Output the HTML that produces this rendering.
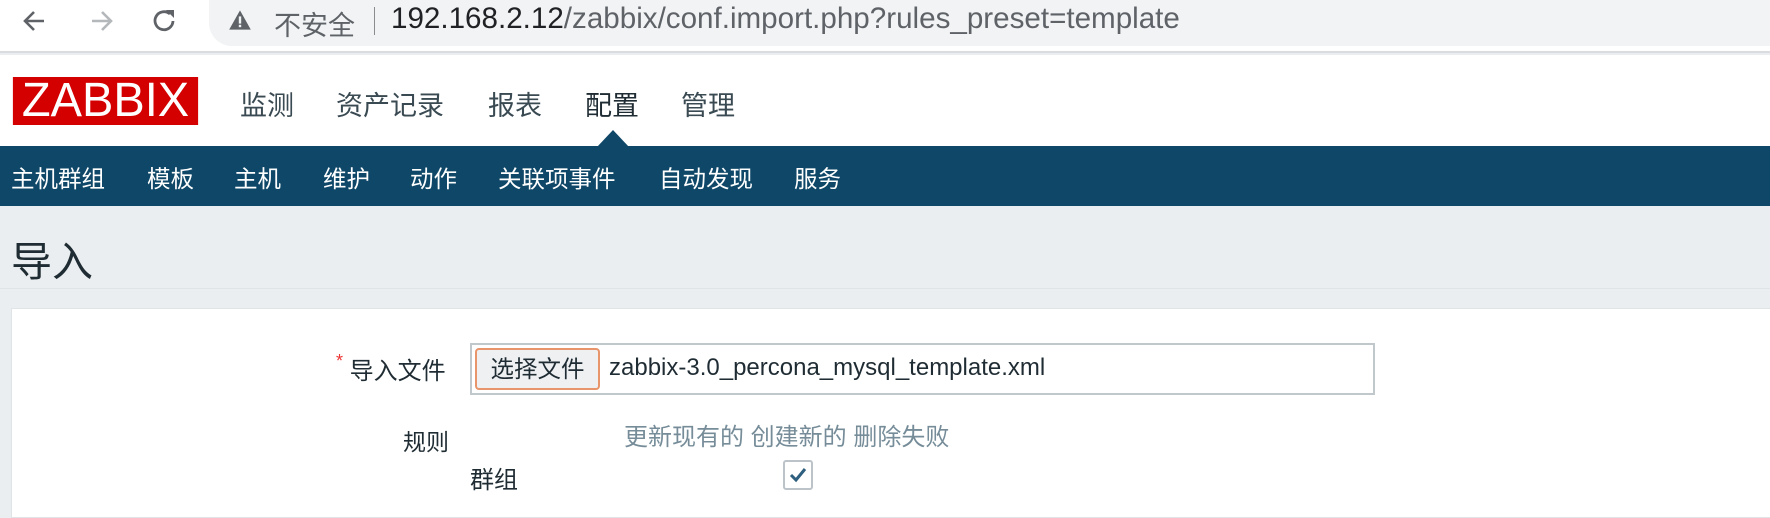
<!DOCTYPE html>
<html><head><meta charset="utf-8"><style>
*{margin:0;padding:0;box-sizing:border-box}
body{width:1770px;height:508px;overflow:hidden;background:#ebeef0;font-family:"Liberation Sans","Noto Sans CJK SC",sans-serif;position:relative}
.a{position:absolute;white-space:nowrap}
</style></head><body>
<div class="a" style="left:0;top:0;width:1770px;height:53px;background:#fff;border-bottom:2px solid #dadce0"></div>
<div class="a" style="left:209px;top:0;width:1600px;height:46px;background:#f1f3f4;border-radius:0 0 0 23px"></div>
<svg class="a" style="left:20px;top:6px" width="170" height="30" viewBox="0 0 170 30">
<path d="M24 15H6M14 6l-9 9 9 9" stroke="#5f6368" stroke-width="2.6" fill="none"/>
<path d="M72 15h18M82 6l9 9-9 9" stroke="#b5b8bb" stroke-width="2.6" fill="none"/>
<path d="M150 8a9 9 0 1 0 3 7" stroke="#5f6368" stroke-width="2.8" fill="none"/><path d="M146 4h8v8z" fill="#5f6368"/>
</svg>
<svg class="a" style="left:228px;top:8px" width="24" height="24" viewBox="0 0 20 20"><path d="M10 2L19 18H1z" fill="#5f6368"/><rect x="9" y="7" width="2" height="6" fill="#f1f3f4"/><rect x="9" y="14" width="2" height="2" fill="#f1f3f4"/></svg>
<div class="a" style="left:274px;top:4px;font-size:27px;color:#5f6368">不安全</div>
<div class="a" style="left:374px;top:7px;width:1px;height:28px;background:#8a8d90"></div>
<div class="a" style="left:391px;top:2px;font-size:29.6px;color:#202124">192.168.2.12<span style="color:#5f6368">/zabbix/conf.import.php?rules_preset=template</span></div>
<div class="a" style="left:0;top:55px;width:1770px;height:91px;background:#fff"></div>
<div class="a" style="left:11px;top:77px;width:189px;height:48px;background:#d40000;color:#fff;font-size:48px;line-height:48px;text-align:center;transform:scaleX(0.98)">ZABBIX</div>
<div class="a" style="left:240px;top:84px;font-size:27px;color:#3a4a52">监测</div>
<div class="a" style="left:336px;top:84px;font-size:27px;color:#3a4a52">资产记录</div>
<div class="a" style="left:488px;top:84px;font-size:27px;color:#3a4a52">报表</div>
<div class="a" style="left:585px;top:84px;font-size:27px;color:#1f2c33">配置</div>
<div class="a" style="left:681px;top:84px;font-size:27px;color:#3a4a52">管理</div>
<div class="a" style="left:0;top:146px;width:1770px;height:60px;background:#0e4767"></div>
<svg class="a" style="left:597px;top:130px" width="32" height="17"><path d="M0 17L16 0L32 17z" fill="#0e4767"/></svg>
<div class="a" style="top:160px;left:11px;font-size:23.5px;color:#fff">主机群组</div>
<div class="a" style="top:160px;left:147px;font-size:23.5px;color:#fff">模板</div>
<div class="a" style="top:160px;left:234px;font-size:23.5px;color:#fff">主机</div>
<div class="a" style="top:160px;left:323px;font-size:23.5px;color:#fff">维护</div>
<div class="a" style="top:160px;left:410px;font-size:23.5px;color:#fff">动作</div>
<div class="a" style="top:160px;left:498px;font-size:23.5px;color:#fff">关联项事件</div>
<div class="a" style="top:160px;left:659px;font-size:23.5px;color:#fff">自动发现</div>
<div class="a" style="top:160px;left:794px;font-size:23.5px;color:#fff">服务</div>
<div class="a" style="left:11px;top:228px;font-size:41px;color:#1f2c33">导入</div>
<div class="a" style="left:0;top:288px;width:1770px;height:1px;background:#dfe4e7"></div>
<div class="a" style="left:11px;top:308px;width:1770px;height:210px;background:#fff;border:1px solid #dfe4e7"></div>
<div class="a" style="left:336px;top:351px;font-size:24px;color:#1f2c33"><span style="color:#e33;font-size:18px;vertical-align:top">*</span> 导入文件</div>
<div class="a" style="left:470px;top:343px;width:905px;height:52px;border:2px solid #c1c8cc;background:#fff"></div>
<div class="a" style="left:475px;top:348px;width:125px;height:42px;border:2px solid #e8956b;border-radius:4px;background:#eef0f2;font-size:23.5px;line-height:38px;text-align:center;color:#1f2c33">选择文件</div>
<div class="a" style="left:609px;top:354px;font-size:24px;color:#1f2c33">zabbix-3.0_percona_mysql_template.xml</div>
<div class="a" style="left:403px;top:423px;font-size:23px;color:#1f2c33">规则</div>
<div class="a" style="left:624px;top:417px;font-size:24px;color:#768d99">更新现有的 创建新的 删除失败</div>
<div class="a" style="left:470px;top:460px;font-size:24px;color:#1f2c33">群组</div>
<div class="a" style="left:783px;top:460px;width:30px;height:30px;border:2px solid #bcc4c9;border-radius:3px;background:#fff"></div>
<svg class="a" style="left:788px;top:466px" width="20" height="18"><path d="M3 9l5 5L17 3" stroke="#2f5f7e" stroke-width="3" fill="none"/></svg>
</body></html>
